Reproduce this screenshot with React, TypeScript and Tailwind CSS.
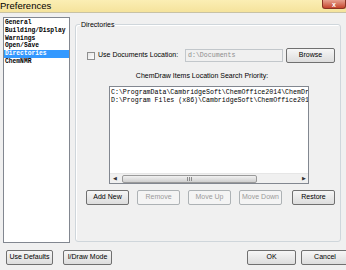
const categories = [
  "General",
  "Building/Display",
  "Warnings",
  "Open/Save",
  "Directories",
  "ChemNMR",
];

const paths = [
  "C:\\ProgramData\\CambridgeSoft\\ChemOffice2014\\ChemDraw",
  "D:\\Program Files (x86)\\CambridgeSoft\\ChemOffice2014\\ChemDraw",
];

const btn =
  "h-[15px] rounded-[2px] border border-[#707070] bg-linear-to-b from-[#f6f6f6] to-[#dddddd] text-black flex items-center justify-center shrink-0";
const btnOff =
  "h-[15px] rounded-[2px] border border-[#adb2b5] bg-[#f4f4f4] text-[#9a9a9a] flex items-center justify-center shrink-0";

export default function App() {
  return (
    <div className="w-[346px] h-[270px] overflow-hidden bg-[#f0f0f0] flex flex-col font-['Liberation_Sans',Arial,sans-serif] text-[7px] text-black">
      {/* title bar */}
      <div className="h-[13px] shrink-0 flex bg-linear-to-b from-[#fbeeb4] to-[#f5e39c] border-b border-[#c8c2a4]">
        <span className="text-[9.5px] leading-[11px]">Preferences</span>
        <div className="ml-auto w-[24px] h-[9px] rounded-b-[3px] bg-linear-to-b from-[#e6a08f] to-[#c4432c] border border-t-0 border-[#8a3324] flex items-center justify-center text-white text-[7px] font-bold leading-none">
          x
        </div>
      </div>

      <div className="flex gap-[5px] pl-[3px] pt-[4px]">
        {/* category list */}
        <div className="w-[67px] h-[226px] shrink-0 border border-[#828790] bg-white pt-[1px] font-['Liberation_Mono',monospace] font-bold text-[6.3px] leading-[7.8px] whitespace-nowrap overflow-hidden">
          {categories.map((c) => (
            <div
              key={c}
              className={
                c === "Directories"
                  ? "pl-[1px] bg-[#3399ff] text-white"
                  : "pl-[1px]"
              }
            >
              {c}
            </div>
          ))}
        </div>

        {/* Directories group */}
        <div className="relative mt-[7px] w-[266px] h-[218px] shrink-0 rounded-[3px] border border-[#cfd6db] shadow-[inset_1px_1px_0_#ffffff] flex flex-col">
          <span className="absolute -top-[5px] left-[4px] px-[1px] bg-[#f0f0f0] leading-[9px]">
            Directories
          </span>

          <div className="mt-[24px] h-[13px] flex items-center pl-[11px]">
            <div className="w-[8px] h-[8px] border border-[#8e8f8f] bg-linear-to-br from-[#e6e6e6] to-white shrink-0" />
            <span className="ml-[3px] w-[87px] shrink-0">Use Documents Location:</span>
            <div className="w-[98px] h-[13px] shrink-0 border border-[#c2c7cb] bg-[#f0f0f0] flex items-center pl-[2px] font-['Liberation_Mono',monospace] text-[6.6px] text-[#8c8c8c]">
              d:\Documents
            </div>
            <div className={btn + " w-[49px] ml-[3px]"}>Browse</div>
          </div>

          <div className="mt-[10px] h-[8px] leading-[8px] text-center pr-[12px]">
            ChemDraw Items Location Search Priority:
          </div>

          <div className="mt-[6px] ml-[33px] w-[200px] h-[98px] border border-[#828790] bg-white flex flex-col">
            <div className="flex-1 overflow-hidden pl-[1px] pt-[2px] font-['Liberation_Mono',monospace] text-[6.6px] leading-[7.5px] whitespace-nowrap">
              {paths.map((p) => (
                <div key={p}>{p}</div>
              ))}
            </div>
            {/* horizontal scrollbar */}
            <div className="h-[10px] flex items-center bg-[#f0f0f0] border-t border-[#e6e6e6]">
              <div className="w-[9px] h-full flex items-center justify-center text-[5px] text-[#333]">◀</div>
              <div className="ml-[3px] w-[135px] h-[8px] rounded-[2px] border border-[#9a9a9a] bg-linear-to-b from-[#f1f1f1] to-[#cfcfcf] flex items-center justify-center gap-[1px]">
                <div className="w-[1px] h-[4px] bg-[#8a8a8a]" />
                <div className="w-[1px] h-[4px] bg-[#8a8a8a]" />
                <div className="w-[1px] h-[4px] bg-[#8a8a8a]" />
              </div>
              <div className="ml-auto w-[9px] h-full flex items-center justify-center text-[5px] text-[#333]">▶</div>
            </div>
          </div>

          <div className="mt-[6px] ml-[10px] flex">
            <div className={btn + " w-[43px]"}>Add New</div>
            <div className={btnOff + " w-[43px] ml-[8px]"}>Remove</div>
            <div className={btnOff + " w-[43px] ml-[8px]"}>Move Up</div>
            <div className={btnOff + " w-[43px] ml-[8px]"}>Move Down</div>
            <div className={btn + " w-[43px] ml-[10px]"}>Restore</div>
          </div>
        </div>
      </div>

      {/* bottom buttons */}
      <div className="mt-[7px] flex pl-[6px]">
        <div className={btn + " w-[47px]"}>Use Defaults</div>
        <div className={btn + " w-[49px] ml-[10px]"}>I/Draw Mode</div>
        <div className={btn + " w-[49px] ml-[135px]"}>OK</div>
        <div className={btn + " w-[48px] ml-[5px]"}>Cancel</div>
      </div>
    </div>
  );
}
